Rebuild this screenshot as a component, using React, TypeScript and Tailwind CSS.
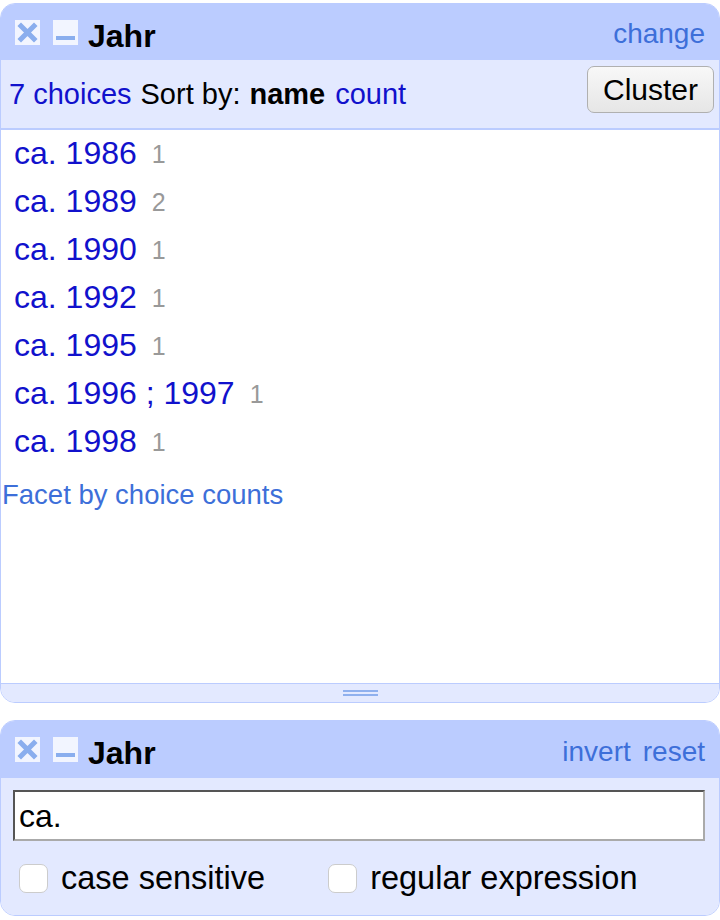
import React from "react";

const XIcon = () => (
  <div className="w-[25px] h-[25px] bg-[#f2f5ff] flex items-center justify-center shrink-0">
    <svg width="25" height="25" viewBox="0 0 25 25">
      <path d="M6 6 L19 19 M19 6 L6 19" stroke="#8aaeee" strokeWidth="5" strokeLinecap="square" />
    </svg>
  </div>
);

const MinusIcon = () => (
  <div className="w-[25px] h-[25px] bg-[#f2f5ff] shrink-0 relative">
    <svg width="25" height="25" viewBox="0 0 25 25">
      <rect x="3" y="16" width="19" height="4" fill="#8aaeee" />
    </svg>
  </div>
);

const choices = [
  ["ca. 1986", "1"],
  ["ca. 1989", "2"],
  ["ca. 1990", "1"],
  ["ca. 1992", "1"],
  ["ca. 1995", "1"],
  ["ca. 1996 ; 1997", "1"],
  ["ca. 1998", "1"],
];

export default function App() {
  return (
    <div
      className="w-[720px] h-[920px] bg-white pt-[3px]"
      style={{ fontFamily: '"Liberation Sans", Arial, sans-serif' }}
    >
      {/* Facet 1 */}
      <div className="w-[720px] border border-[#bbccff] rounded-[15px] overflow-hidden">
        <div className="h-[56px] bg-[#bbccff] flex items-center pl-[14px] pr-[14px]">
          <XIcon />
          <div className="ml-[13px]"><MinusIcon /></div>
          <span className="ml-[10px] text-[32px] font-bold text-black leading-none mt-[7px]">Jahr</span>
          <span className="ml-auto text-[28px] text-[#3d6fd9] leading-none mt-[4px]">change</span>
        </div>
        <div className="h-[70px] bg-[#e3e9ff] border-b-2 border-[#bbccff] flex items-center pl-[8px] pr-[5px]">
          <span className="text-[29px] leading-none text-[#1111cc]">7 choices</span>
          <span className="text-[29px] leading-none text-black ml-[9px]">Sort by:</span>
          <span className="text-[29px] leading-none text-black font-bold ml-[9px]">name</span>
          <span className="text-[29px] leading-none text-[#1111cc] ml-[10px]">count</span>
          <button className="ml-auto self-start mt-[6px] w-[127px] h-[47px] rounded-[7px] border border-[#b0b0b0] bg-gradient-to-b from-[#f8f8f8] to-[#e6e6e6] text-[30px] text-black leading-none flex items-center justify-center">
            Cluster
          </button>
        </div>
        <div className="h-[553px] bg-white">
          {choices.map(([n, c]) => (
            <div key={n} className="h-[48px] flex items-center pl-[13px]">
              <span className="text-[32px] leading-none text-[#1111cc] -mt-[2px]">{n}</span>
              <span className="text-[25px] leading-none text-[#999999] ml-[15px] mt-[1px]">{c}</span>
            </div>
          ))}
          <div className="mt-[13px] h-[32px] flex items-center pl-[1px] text-[27.5px] leading-none text-[#3d6fd9]">
            Facet by choice counts
          </div>
        </div>
        <div className="h-[19px] bg-[#e3e9ff] border-t border-[#bbccff] flex flex-col items-center justify-center gap-[2px]">
          <div className="w-[35px] h-[2px] bg-[#8fb0ee]" />
          <div className="w-[35px] h-[2px] bg-[#8fb0ee]" />
        </div>
      </div>

      {/* Facet 2 */}
      <div className="mt-[17px] w-[720px] border border-[#bbccff] rounded-[15px] overflow-hidden">
        <div className="h-[57px] bg-[#bbccff] flex items-center pl-[14px] pr-[14px]">
          <XIcon />
          <div className="ml-[13px]"><MinusIcon /></div>
          <span className="ml-[10px] text-[32px] font-bold text-black leading-none mt-[7px]">Jahr</span>
          <span className="ml-auto text-[28px] text-[#3d6fd9] leading-none mt-[5px]">invert</span>
          <span className="ml-[12px] text-[28px] text-[#3d6fd9] leading-none mt-[5px]">reset</span>
        </div>
        <div className="bg-[#e3e9ff] h-[137px] pt-[12px] pl-[12px] pr-[14px]">
          <div className="h-[51px] w-full bg-white border-2 border-t-[#555555] border-l-[#555555] border-r-[#aaaaaa] border-b-[#aaaaaa] flex items-center pl-[4px]">
            <span className="text-[32px] leading-none text-black">ca.</span>
          </div>
          <div className="flex items-center mt-[22px] pl-[6px]">
            <div className="w-[29px] h-[29px] rounded-[7px] border border-[#cccccc] bg-white" />
            <span className="ml-[13px] text-[32.5px] leading-none text-black -mt-[1px]">case sensitive</span>
            <div className="ml-[63px] w-[29px] h-[29px] rounded-[7px] border border-[#cccccc] bg-white" />
            <span className="ml-[13px] text-[32.5px] leading-none text-black -mt-[1px]">regular expression</span>
          </div>
        </div>
      </div>
    </div>
  );
}
